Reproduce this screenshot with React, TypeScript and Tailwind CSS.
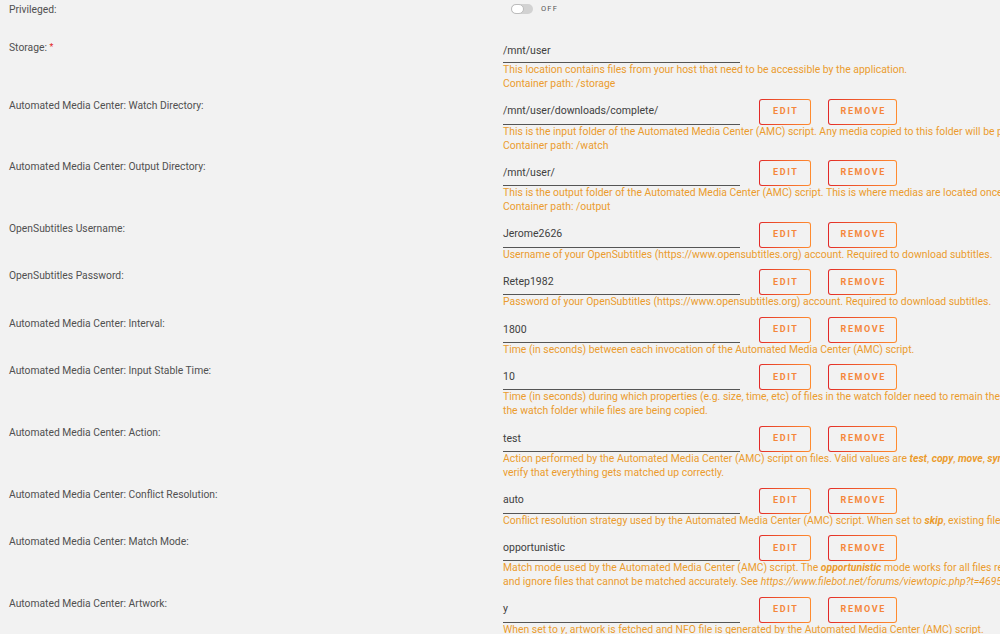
import React from "react";

type Row = {
  label: string;
  value: string;
  desc: React.ReactNode[];
};

const BI = ({ children }: { children: React.ReactNode }) => (
  <b className="font-bold italic">{children}</b>
);

const rows: Row[] = [
  {
    label: "Automated Media Center: Watch Directory:",
    value: "/mnt/user/downloads/complete/",
    desc: [
      "This is the input folder of the Automated Media Center (AMC) script. Any media copied to this folder will be processed by the script.",
      "Container path: /watch",
    ],
  },
  {
    label: "Automated Media Center: Output Directory:",
    value: "/mnt/user/",
    desc: [
      "This is the output folder of the Automated Media Center (AMC) script. This is where medias are located once they are renamed and organized.",
      "Container path: /output",
    ],
  },
  {
    label: "OpenSubtitles Username:",
    value: "Jerome2626",
    desc: [
      "Username of your OpenSubtitles (https://www.opensubtitles.org) account. Required to download subtitles.",
    ],
  },
  {
    label: "OpenSubtitles Password:",
    value: "Retep1982",
    desc: [
      "Password of your OpenSubtitles (https://www.opensubtitles.org) account. Required to download subtitles.",
    ],
  },
  {
    label: "Automated Media Center: Interval:",
    value: "1800",
    desc: [
      "Time (in seconds) between each invocation of the Automated Media Center (AMC) script.",
    ],
  },
  {
    label: "Automated Media Center: Input Stable Time:",
    value: "10",
    desc: [
      "Time (in seconds) during which properties (e.g. size, time, etc) of files in the watch folder need to remain the same before invoking the Automated Media Center (AMC) script. This is to avoid processing",
      "the watch folder while files are being copied.",
    ],
  },
  {
    label: "Automated Media Center: Action:",
    value: "test",
    desc: [
      <>
        Action performed by the Automated Media Center (AMC) script on files. Valid values are <BI>test</BI>,{" "}
        <BI>copy</BI>, <BI>move</BI>, <BI>symlink</BI>, <BI>hardlink</BI>, <BI>keeplink</BI>, <BI>duplicate</BI> or{" "}
        <BI>clone</BI>. Use the <BI>test</BI> operation to perform a dry-run and
      </>,
      "verify that everything gets matched up correctly.",
    ],
  },
  {
    label: "Automated Media Center: Conflict Resolution:",
    value: "auto",
    desc: [
      <>
        Conflict resolution strategy used by the Automated Media Center (AMC) script. When set to <BI>skip</BI>, existing
        files are never overriden, while <BI>auto</BI> overrides existing file only if new media is better.
      </>,
    ],
  },
  {
    label: "Automated Media Center: Match Mode:",
    value: "opportunistic",
    desc: [
      <>
        Match mode used by the Automated Media Center (AMC) script. The <BI>opportunistic</BI> mode works for all files
        regardless how badly they are named, while the <BI>strict</BI> mode works for reasonably well-named files
      </>,
      <>
        and ignore files that cannot be matched accurately. See{" "}
        <i className="italic">https://www.filebot.net/forums/viewtopic.php?t=4695</i> for complete documentation.
      </>,
    ],
  },
  {
    label: "Automated Media Center: Artwork:",
    value: "y",
    desc: [
      <>
        When set to <i className="italic">y</i>, artwork is fetched and NFO file is generated by the Automated Media
        Center (AMC) script.
      </>,
    ],
  },
];

function Btn({ text, w }: { text: string; w: string }) {
  return (
    <div className={`${w} h-[26px] shrink-0 rounded-[3px] bg-gradient-to-r from-[#e22828] to-[#ff8c2f] p-px`}>
      <div className="flex h-full w-full items-center justify-center rounded-[2px] bg-[#f2f2f2]">
        <span className="pl-[1.5px] text-[9px] font-bold uppercase tracking-[1.6px] text-[#f5873b]">{text}</span>
      </div>
    </div>
  );
}

function Desc({ lines }: { lines: React.ReactNode[] }) {
  return (
    <div className="whitespace-nowrap text-[10.4px] leading-[14px] text-[#eb9c2e]">
      {lines.map((l, i) => (
        <div key={i}>{l}</div>
      ))}
    </div>
  );
}

export default function App() {
  return (
    <div
      className="h-[634px] w-[1000px] overflow-hidden bg-[#f2f2f2] text-[#505050]"
      style={{ fontFamily: "Roboto, 'Liberation Sans', sans-serif" }}
    >
      {/* Privileged */}
      <div className="flex h-[39px]">
        <div className="w-[503px] shrink-0 pl-[9px] pt-[3px] text-[10.3px] leading-[13px]">Privileged:</div>
        <div className="flex items-start pt-[4px]">
          <div className="ml-[8px] flex h-[10px] w-[22px] items-center rounded-full bg-[#d2d2d2]">
            <div className="h-[10px] w-[13px] rounded-full border border-[#bcbcbc] bg-white" />
          </div>
          <span className="ml-[8px] text-[7.5px] leading-[10px] tracking-[1.2px] text-[#555]">OFF</span>
        </div>
      </div>

      {/* Storage */}
      <div className="flex">
        <div className="w-[503px] shrink-0 pl-[9px] pt-[2px] text-[10.3px] leading-[13px]">
          Storage: <span className="align-top text-[9px] text-[#e22828]">*</span>
        </div>
        <div className="flex flex-col pb-[7.5px]">
          <div className="flex h-[24px] w-[237px] items-center border-b border-[#555] text-[10.5px] text-[#404040]">
            /mnt/user
          </div>
          <Desc
            lines={[
              "This location contains files from your host that need to be accessible by the application.",
              "Container path: /storage",
            ]}
          />
        </div>
      </div>

      {rows.map((r) => (
        <div key={r.label} className="flex">
          <div className="w-[503px] shrink-0 pl-[9px] text-[10.3px] leading-[13px]">{r.label}</div>
          <div className="flex flex-col pb-[7.6px]">
            <div className="flex items-start">
              <div className="flex h-[26px] w-[237px] shrink-0 items-center border-b border-[#555] text-[10.5px] text-[#404040]">
                {r.value}
              </div>
              <div className="ml-[19px]">
                <Btn text="Edit" w="w-[52px]" />
              </div>
              <div className="ml-[17px]">
                <Btn text="Remove" w="w-[69px]" />
              </div>
            </div>
            <Desc lines={r.desc} />
          </div>
        </div>
      ))}
    </div>
  );
}
